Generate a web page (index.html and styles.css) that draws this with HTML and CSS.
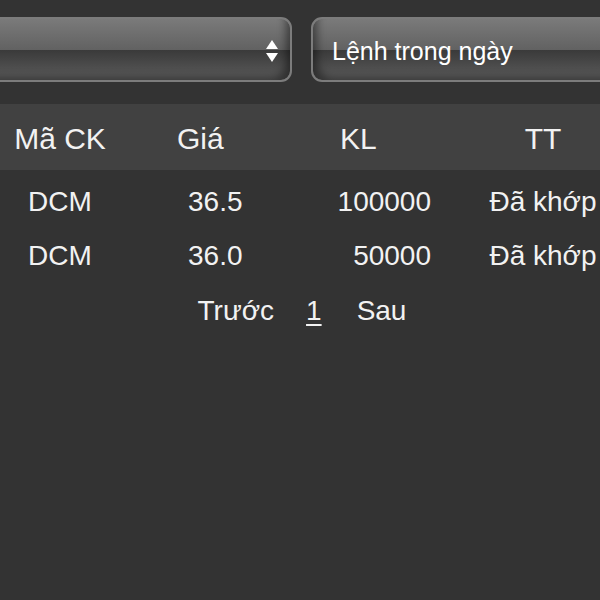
FILE: index.html
```html
<!DOCTYPE html>
<html lang="vi">
<head>
    <meta charset="UTF-8">
    <meta name="viewport" content="width=device-width, initial-scale=1.0">
    <title>Sổ lệnh</title>
    <link rel="stylesheet" href="styles.css">
</head>
<body>
    <div class="filter-row">
        <div class="fake-select left-select">
            <span class="select-text"></span>
            <svg class="select-arrows" width="12" height="22" viewBox="0 0 12 22">
                <polygon points="6,0 12,9 0,9" fill="#fff"/>
                <polygon points="0,13 12,13 6,22" fill="#fff"/>
            </svg>
        </div>
        <div class="fake-select right-select">
            <span class="select-text">Lệnh trong ngày</span>
        </div>
    </div>

    <table class="order-table">
        <colgroup>
            <col class="c-code">
            <col class="c-price">
            <col class="c-qty">
            <col class="c-status">
        </colgroup>
        <thead>
            <tr>
                <th class="code">Mã CK</th>
                <th class="price">Giá</th>
                <th class="qty">KL</th>
                <th class="status">TT</th>
            </tr>
        </thead>
        <tbody>
            <tr>
                <td class="code">DCM</td>
                <td class="price">36.5</td>
                <td class="qty">100000</td>
                <td class="status">Đã khớp</td>
            </tr>
            <tr>
                <td class="code">DCM</td>
                <td class="price">36.0</td>
                <td class="qty">50000</td>
                <td class="status">Đã khớp</td>
            </tr>
        </tbody>
    </table>

    <div class="pager">
        <span>Trước</span>
        <span class="current">1</span>
        <span>Sau</span>
    </div>
</body>
</html>
```

FILE: styles.css
```css
html, body {
    margin: 0;
    height: 100%;
    overflow: hidden;
    background-color: #333333;
    font-family: "Liberation Sans", Arial, sans-serif;
    color: #f2f2f2;
}
.filter-row {
    display: flex;
    gap: 19px;
    width: 660px;
    margin-left: -25px;
    padding-top: 17px;
}
.fake-select {
    flex: 1;
    height: 65px;
    box-sizing: border-box;
    border: 2px solid #7c7c7c;
    border-radius: 11px;
    background: linear-gradient(to bottom, #7a7a7a 0%, #626262 50%, #3a3a3a 51%, #474747 70%, #5c5c5c 100%);
    display: flex;
    align-items: center;
    font-size: 25px;
    color: #fff;
}
.left-select {
    justify-content: flex-end;
    padding-right: 12px;
    box-shadow: inset -10px -8px 8px -6px rgba(0, 0, 0, 0.45);
}
.right-select {
    padding-left: 19px;
    padding-top: 4px;
    box-shadow: inset 10px -8px 8px -6px rgba(0, 0, 0, 0.45);
}
.select-arrows {
    display: block;
    margin-top: 2px;
}

.order-table {
    margin-top: 22px;
    width: 620px;
    table-layout: fixed;
    border-collapse: collapse;
}
.c-code { width: 120px; }
.c-price { width: 180px; }
.c-qty { width: 160px; }
.c-status { width: 160px; }
th, td {
    padding: 0;
    white-space: nowrap;
    overflow: visible;
}
thead tr {
    background-color: #414141;
    border-bottom: 5px solid #333333;
}
th {
    font-size: 30px;
    font-weight: normal;
    line-height: 36px;
    padding-top: 17px;
    padding-bottom: 13px;
}
td {
    font-size: 28px;
    line-height: 54px;
}
.code { text-align: center; }
th.price { text-align: left; padding-left: 57px; }
td.price { text-align: left; padding-left: 68px; }
th.qty { text-align: left; padding-left: 40px; }
td.qty { text-align: right; padding-right: 29px; }
.status { text-align: center; padding-left: 6px; }

.pager {
    display: flex;
    justify-content: center;
    font-size: 28px;
    line-height: 54px;
    margin-top: 1px;
}
.pager span:first-child {
    margin-left: 4px;
}
.pager .current {
    margin: 0 35px 0 32px;
    text-decoration: underline;
    text-underline-offset: 4px;
}
```
